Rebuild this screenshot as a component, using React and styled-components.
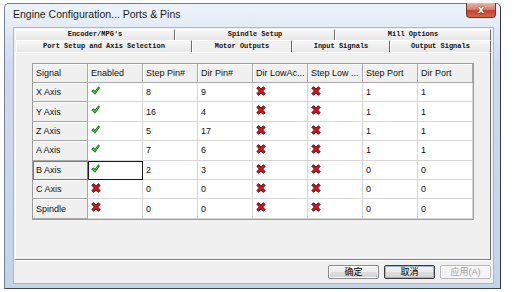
import React from "react";
import styled, { createGlobalStyle } from "styled-components";

const GlobalStyle = createGlobalStyle`
  html, body { margin: 0; padding: 0; background: #ffffff; }
  body { font-family: "Liberation Sans", Arial, sans-serif; }
  * { box-sizing: border-box; }
`;

const Window = styled.div`
  margin: 3px 0 0 4px;
  width: 497px;
  height: 286px;
  border: 1px solid #6f8196;
  border-right-color: #2f3a46;
  border-bottom-color: #3a4656;
  border-radius: 5px 5px 0 0;
  background: linear-gradient(180deg, #eef3f9 0px, #e3ebf5 22px, #cddbec 60px, #c3d4e9 100%);
  display: flex;
  flex-direction: column;
`;

const TitleBar = styled.div`
  height: 23px;
  display: flex;
  align-items: flex-start;
  padding-left: 8px;
  padding-right: 4px;
`;

const Title = styled.div`
  flex: 1;
  font-size: 10.5px;
  line-height: 20px;
  color: #1b1b1b;
  white-space: nowrap;
`;

const CloseButton = styled.div`
  width: 30px;
  height: 15px;
  margin-top: -1px;
  border: 1px solid #7a3126;
  border-top: none;
  border-radius: 0 0 4px 4px;
  background: linear-gradient(180deg, #eab3a6 0%, #d9826f 45%, #c2402c 55%, #d8664d 100%);
  color: #fff;
  font-family: "DejaVu Sans", sans-serif;
  font-weight: bold;
  font-size: 10px;
  line-height: 13px;
  text-align: center;
  text-shadow: 0 0 2px #6b1a10;
`;

const Client = styled.div`
  flex: 1;
  margin: 0 6px 4px 8px;
  border: 1px solid #a6b8cd;
  background: #f0f0f0;
  display: flex;
  flex-direction: column;
  padding: 1px 2px 0 1px;
`;

const TabRow = styled.div`
  display: flex;
  height: ${(p) => p.$h}px;
  margin-left: ${(p) => p.$indent}px;
`;

const Tab = styled.div`
  width: ${(p) => p.$w}px;
  height: 100%;
  font-family: "Liberation Mono", "DejaVu Sans Mono", monospace;
  font-weight: bold;
  font-size: 7px;
  line-height: ${(p) => p.$lh}px;
  text-align: center;
  color: #111;
  white-space: nowrap;
  border-top: 1px solid #ffffff;
  border-left: 1px solid #ffffff;
  border-right: 1px solid #6a6a6a;
  background: ${(p) => (p.$selected ? "#f0f0f0" : "linear-gradient(180deg, #f7f7f7, #e6e6e6)")};
`;

const Panel = styled.div`
  height: 208px;
  border-left: 1px solid #ffffff;
  border-top: 1px solid #ffffff;
  border-right: 1px solid #6a6a6a;
  border-bottom: 1px solid #7d7d7d;
  box-shadow: 0 1px 0 #ffffff;
  background: #f0f0f0;
  padding: 10px 0 0 16px;
`;

const Grid = styled.div`
  display: grid;
  grid-template-columns: repeat(8, 55px);
  grid-template-rows: 19px repeat(7, 19.4px);
  width: 442px;
  border: 1px solid #9c9c9c;
  background: #ffffff;
`;

const HeadCell = styled.div`
  background: #f0f0f0;
  border-right: 1px solid #a9a9a9;
  border-bottom: 1px solid #a9a9a9;
  box-shadow: inset 1px 1px 0 #ffffff${(p) => (p.$active ? ", inset 0 1px 0 #6f6f6f" : "")};
  font-size: 9px;
  color: #111;
  padding-left: 3px;
  display: flex;
  align-items: center;
  white-space: nowrap;
  overflow: hidden;
`;

const RowHead = styled(HeadCell)`
  ${(p) => (p.$current ? "outline: 1px solid #7a7a7a; outline-offset: -1px;" : "")}
`;

const Cell = styled.div`
  background: #ffffff;
  border-right: 1px solid #d6d6d6;
  border-bottom: 1px solid #d6d6d6;
  font-size: 9px;
  color: #111;
  padding-left: 3px;
  display: flex;
  align-items: ${(p) => (p.$icon ? "flex-start" : "center")};
  padding-top: ${(p) => (p.$icon ? "3px" : "0")};
  ${(p) => (p.$focus ? "outline: 1px solid #1a1a1a; outline-offset: -1px;" : "")}
`;

const ButtonRow = styled.div`
  display: flex;
  justify-content: flex-end;
  gap: 5px;
  margin-top: 5px;
  padding-right: 0;
`;

const Button = styled.div`
  width: 51px;
  height: 14px;
  border: 1px solid ${(p) => (p.$disabled ? "#b5b9bd" : p.$default ? "#3c3c3c" : "#8a8a8a")};
  border-radius: 2px;
  background: ${(p) => (p.$disabled ? "#f4f4f4" : "linear-gradient(180deg, #f6f6f6 0%, #ebebeb 50%, #dddddd 51%, #d3d3d3 100%)")};
  box-shadow: ${(p) => (p.$default ? "inset 0 0 0 1px #9ab6d0" : "inset 0 0 0 1px #fbfbfb")};
  font-family: "Liberation Sans", "Noto Sans CJK SC", sans-serif;
  font-size: 9px;
  line-height: 12px;
  text-align: center;
  color: ${(p) => (p.$disabled ? "#a3a3a3" : "#000")};
`;

const CheckIcon = () => (
  <svg width="9" height="9" viewBox="0 0 10 10">
    <path
      d="M0.8 5.6 L3.2 4.3 L4.3 6.1 L8.4 0.8 L9.4 2.2 L4.4 9.2 Z"
      fill="#3ccf3c"
      stroke="#145a14"
      strokeWidth="0.9"
      strokeLinejoin="round"
    />
  </svg>
);

const CrossIcon = () => (
  <svg width="10" height="10" viewBox="0 0 10 10">
    <path
      d="M0.8 2.2 L2.8 0.7 L5 3.1 L7.3 0.8 L9.2 2.4 L6.7 5 L9.2 7.8 L7.1 9.3 L5 6.9 L2.7 9.3 L0.8 7.6 L3.3 5 Z"
      fill="#e2101c"
      stroke="#4a0505"
      strokeWidth="0.9"
      strokeLinejoin="round"
    />
  </svg>
);

const headers = ["Signal", "Enabled", "Step Pin#", "Dir Pin#", "Dir LowAc...", "Step Low ...", "Step Port", "Dir Port"];

const rows = [
  ["X Axis", true, "8", "9", false, false, "1", "1"],
  ["Y Axis", true, "16", "4", false, false, "1", "1"],
  ["Z Axis", true, "5", "17", false, false, "1", "1"],
  ["A Axis", true, "7", "6", false, false, "1", "1"],
  ["B Axis", true, "2", "3", false, false, "0", "0"],
  ["C Axis", false, "0", "0", false, false, "0", "0"],
  ["Spindle", false, "0", "0", false, false, "0", "0"],
];

const backTabs = [
  { label: "Encoder/MPG's", w: 160 },
  { label: "Spindle Setup", w: 160 },
  { label: "Mill Options", w: 156 },
];

const frontTabs = [
  { label: "Port Setup and Axis Selection", w: 176 },
  { label: "Motor Outputs", w: 100, selected: true },
  { label: "Input Signals", w: 98 },
  { label: "Output Signals", w: 101 },
];

export default function App() {
  return (
    <>
      <GlobalStyle />
      <Window>
        <TitleBar>
          <Title>Engine Configuration... Ports &amp; Pins</Title>
          <CloseButton>x</CloseButton>
        </TitleBar>
        <Client>
          <TabRow $h={11} $indent={0}>
            {backTabs.map((t) => (
              <Tab key={t.label} $w={t.w} $lh={9}>
                {t.label}
              </Tab>
            ))}
          </TabRow>
          <TabRow $h={12} $indent={1}>
            {frontTabs.map((t) => (
              <Tab key={t.label} $w={t.w} $lh={10} $selected={t.selected}>
                {t.label}
              </Tab>
            ))}
          </TabRow>
          <Panel>
            <Grid>
              {headers.map((h, i) => (
                <HeadCell key={h} $active={i === 1}>
                  {h}
                </HeadCell>
              ))}
              {rows.map((r, ri) =>
                r.map((v, ci) => {
                  if (ci === 0)
                    return (
                      <RowHead key={ci} $current={ri === 4}>
                        {v}
                      </RowHead>
                    );
                  if (typeof v === "boolean")
                    return (
                      <Cell key={ci} $icon $focus={ri === 4 && ci === 1}>
                        {v ? <CheckIcon /> : <CrossIcon />}
                      </Cell>
                    );
                  return <Cell key={ci}>{v}</Cell>;
                })
              )}
            </Grid>
          </Panel>
          <ButtonRow>
            <Button>确定</Button>
            <Button $default>取消</Button>
            <Button $disabled>应用(A)</Button>
          </ButtonRow>
        </Client>
      </Window>
    </>
  );
}
